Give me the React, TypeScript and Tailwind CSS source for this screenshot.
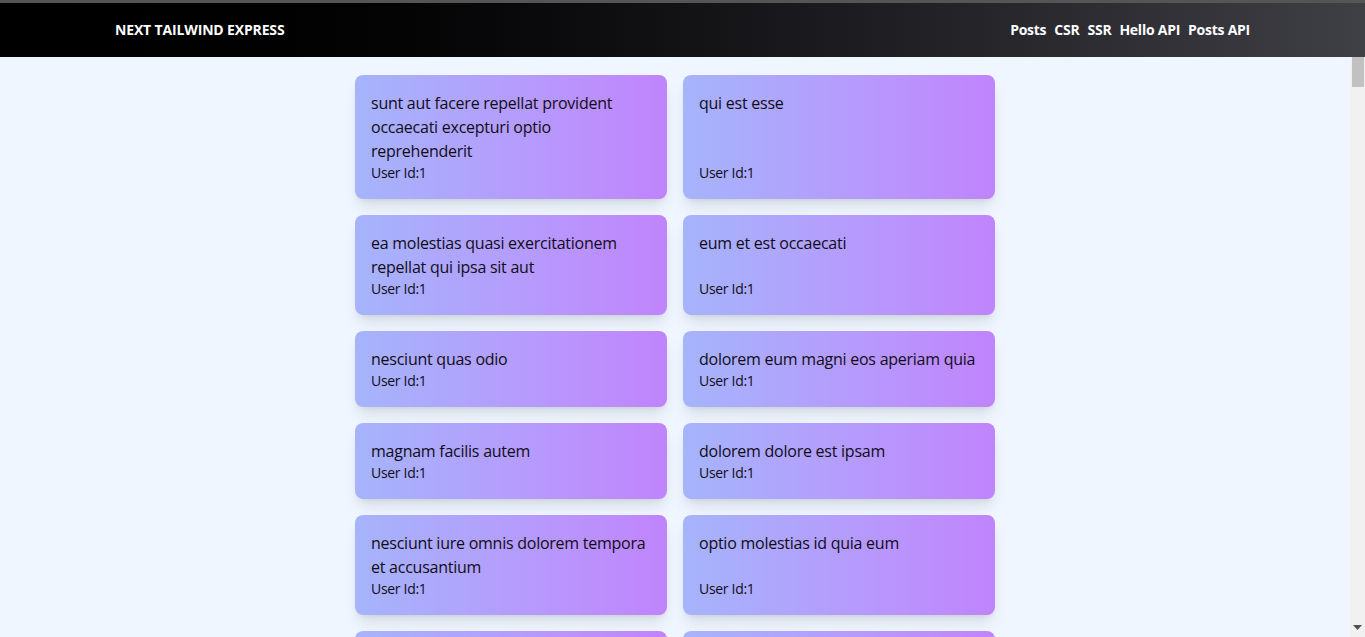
import React from 'react';

type Post = { id: number; userId: number; title: string };

const posts: Post[] = [
  { id: 1, userId: 1, title: 'sunt aut facere repellat provident occaecati excepturi optio reprehenderit' },
  { id: 2, userId: 1, title: 'qui est esse' },
  { id: 3, userId: 1, title: 'ea molestias quasi exercitationem repellat qui ipsa sit aut' },
  { id: 4, userId: 1, title: 'eum et est occaecati' },
  { id: 5, userId: 1, title: 'nesciunt quas odio' },
  { id: 6, userId: 1, title: 'dolorem eum magni eos aperiam quia' },
  { id: 7, userId: 1, title: 'magnam facilis autem' },
  { id: 8, userId: 1, title: 'dolorem dolore est ipsam' },
  { id: 9, userId: 1, title: 'nesciunt iure omnis dolorem tempora et accusantium' },
  { id: 10, userId: 1, title: 'optio molestias id quia eum' },
  { id: 11, userId: 2, title: 'et ea vero quia laudantium autem' },
  { id: 12, userId: 2, title: 'in quibusdam tempore odit est dolorem' },
  { id: 13, userId: 2, title: 'dolorum ut in voluptas mollitia et saepe quo animi' },
  { id: 14, userId: 2, title: 'voluptatem eligendi optio' },
];

const links = ['Posts', 'CSR', 'SSR', 'Hello API', 'Posts API'];

const App: React.FC = () => {
  return (
    <div className="h-screen flex flex-col bg-[#eff6ff] font-['Open_Sans','Noto_Sans',sans-serif] overflow-hidden">
      {/* Header */}
      <header className="shrink-0 border-t-[3px] border-[#555555] bg-gradient-to-r from-black to-[#3f3f46] h-[57px] flex items-center justify-between px-[115px]">
        <a className="text-white text-sm font-bold tracking-[-0.15px]">NEXT TAILWIND EXPRESS</a>
        <nav className="flex items-center gap-2">
          {links.map((l) => (
            <a key={l} className="text-white text-sm font-bold tracking-[-0.25px]">{l}</a>
          ))}
        </nav>
      </header>

      <div className="flex-1 flex min-h-0">
        <main className="flex-1 overflow-hidden">
          <div className="max-w-[640px] mx-auto pt-[18px] pb-8 grid grid-cols-2 gap-4">
            {posts.map((p) => (
              <div
                key={p.id}
                className="flex flex-col justify-between p-4 rounded-lg shadow-lg bg-gradient-to-r from-[#a5b4fc] to-[#c084fc] text-[#110d18]"
              >
                <h2 className="text-base leading-6 tracking-[-0.25px]">{p.title}</h2>
                <p className="text-sm leading-5 font-medium tracking-[-0.3px]">User Id:{p.userId}</p>
              </div>
            ))}
          </div>
        </main>

        {/* scrollbar */}
        <div className="w-[15px] shrink-0 bg-[#f1f1f1] flex flex-col items-center">
          <div className="w-[12px] h-[30px] bg-[#c1c1c1] ml-[1px]" />
          <div className="flex-1" />
          <svg width="9" height="6" viewBox="0 0 9 6" className="mb-[6px]">
            <path d="M0 0h9L4.5 5z" fill="#505050" />
          </svg>
        </div>
      </div>
    </div>
  );
};

export default App;
